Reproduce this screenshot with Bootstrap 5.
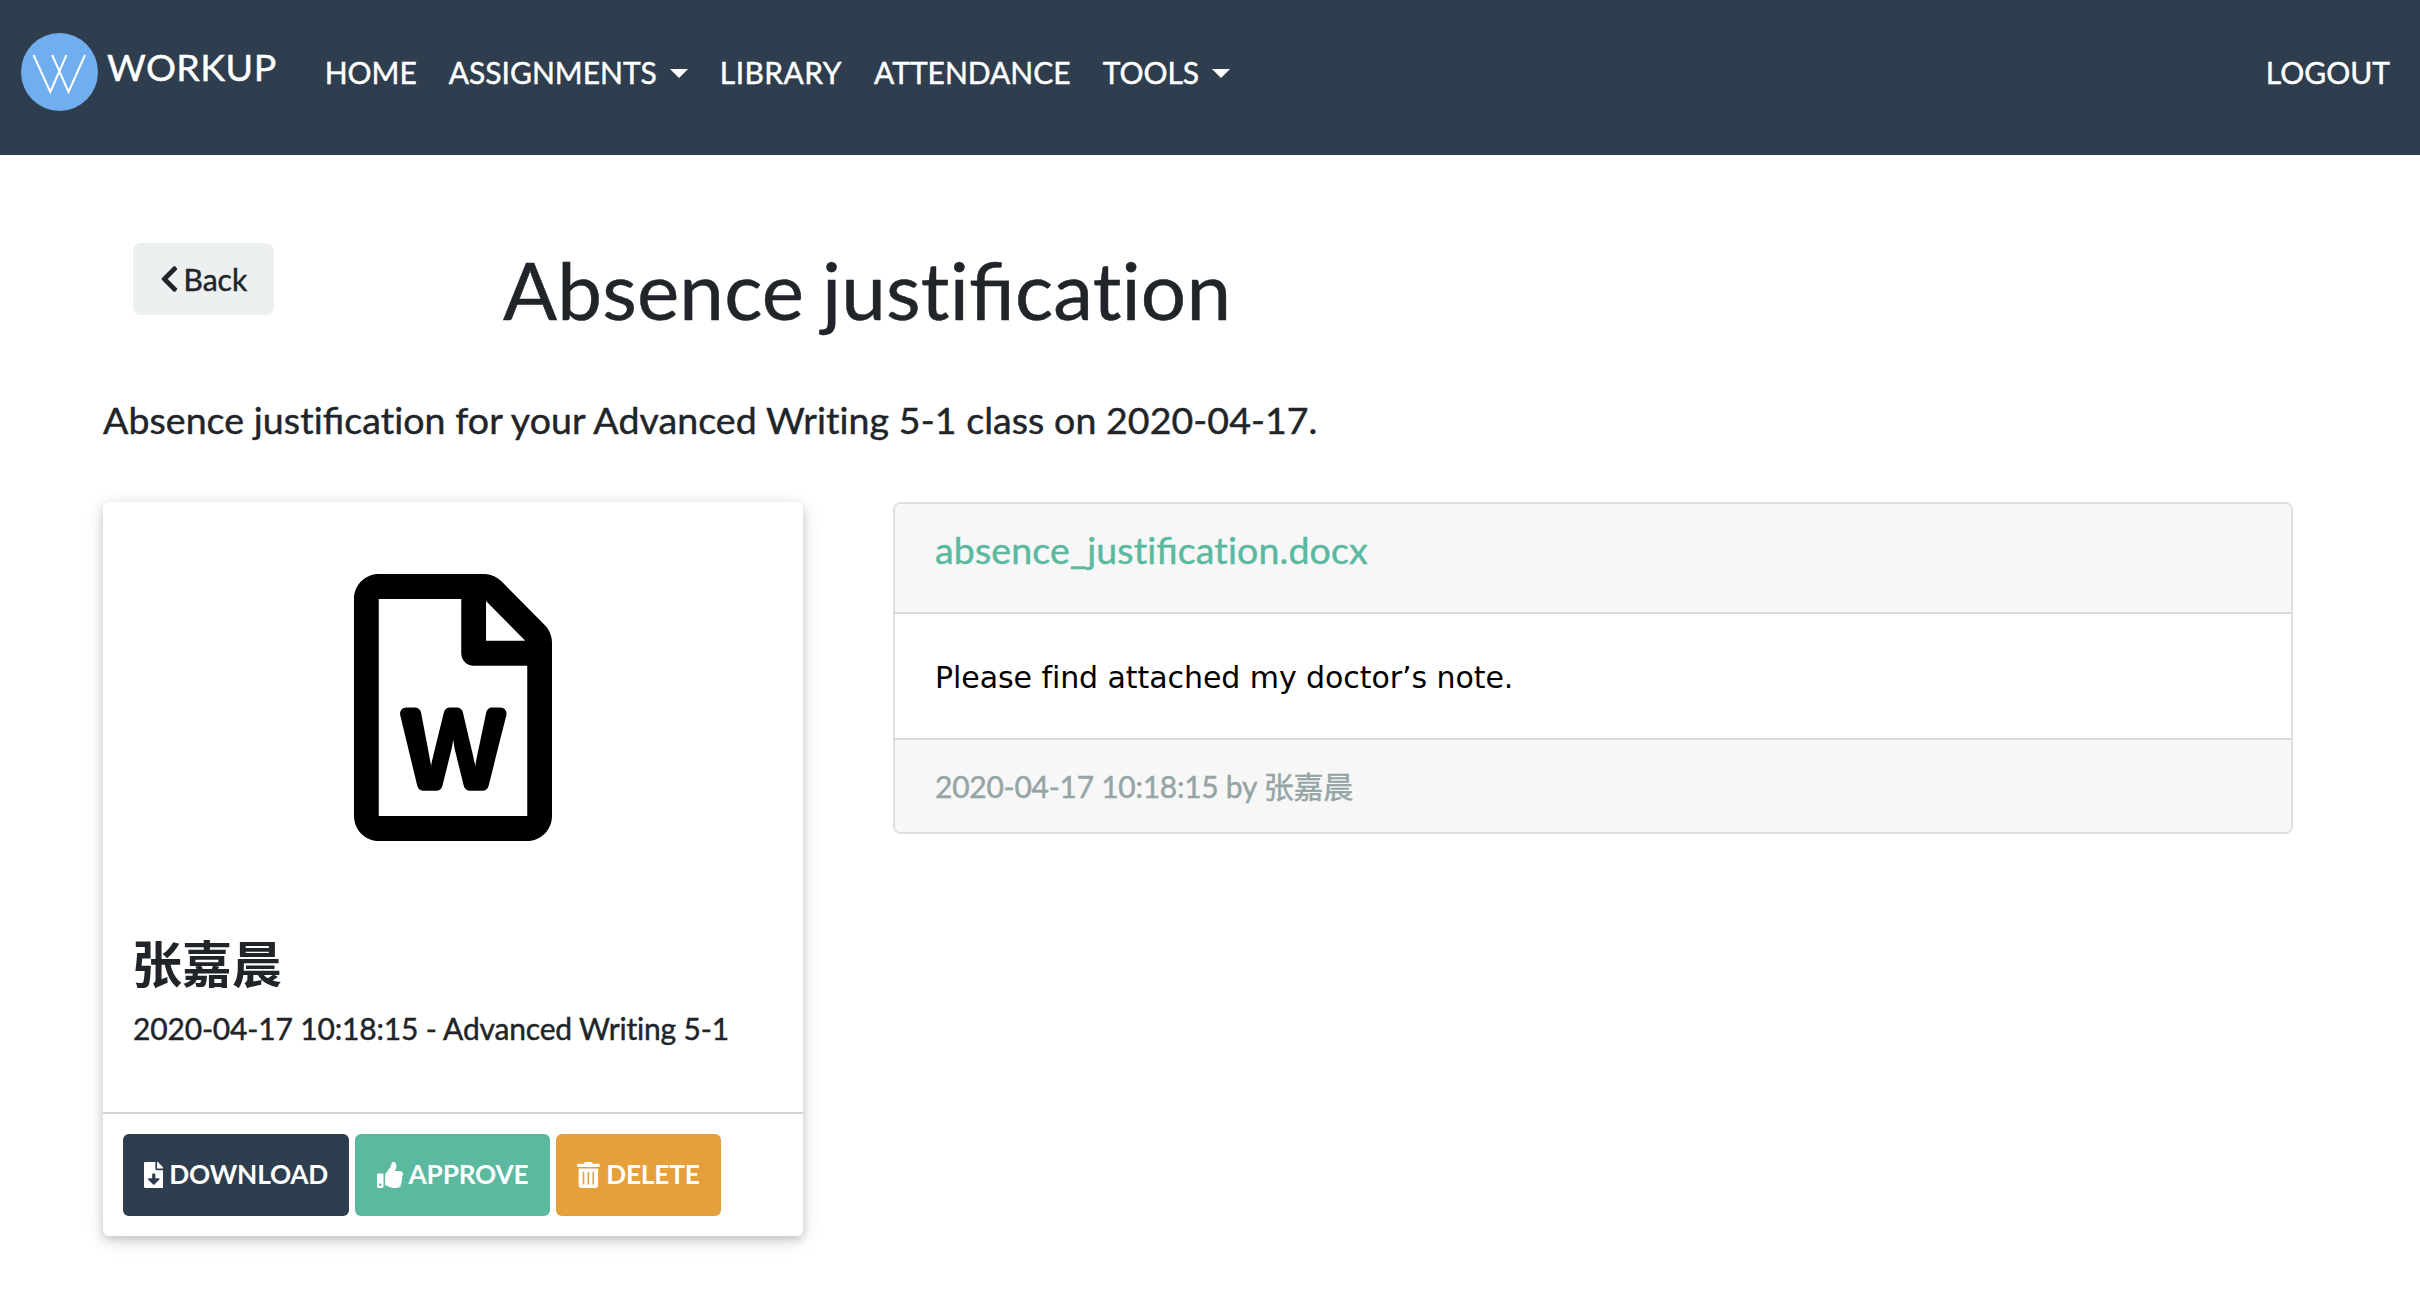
<!DOCTYPE html>
<html lang="en">
<head>
<meta charset="utf-8">
<title>WorkUp - Absence justification</title>
<link href="https://cdn.jsdelivr.net/npm/bootstrap@5.3.0/dist/css/bootstrap.min.css" rel="stylesheet">
<style>
body{font-family:Lato,"Noto Sans CJK SC",sans-serif;font-size:30px;line-height:45px;color:#212529;background:#fff;font-variant-ligatures:none;-webkit-text-stroke:.45px currentColor}
.lig{font-variant-ligatures:common-ligatures;letter-spacing:0}
.topbar{background:#2f3e4e;height:155px;padding:16px 0 0 21px;align-items:flex-start}
.brandlink{color:#fff;font-size:37.5px;line-height:56px;padding:0;margin:17px 32px 0 0;display:flex;align-items:flex-start;gap:9px}
.brandlink:hover{color:#fff}
.brandlink span{margin-top:6px;letter-spacing:.45px}
.brandlink svg{width:77px;height:78px;display:block}
.topbar .navbar-nav .nav-link{color:#fff;padding:34px 16px 0;line-height:45px;white-space:nowrap}
.topbar .navbar-nav .nav-library{letter-spacing:.45px}
.topbar .dropdown-toggle::after{border-width:9px 9px 0;border-top-style:solid;margin-left:13px;vertical-align:6px}
.logout{margin-right:14px}
.main-area{min-height:1145px;padding:86px 127px 0 103px}
.back-btn{background:#ecf0f1;border:0;border-radius:8px;font-size:30px;line-height:45px;height:72px;width:141px;margin:2px 0 0 30px;color:#212529;padding:0;display:flex;align-items:center;justify-content:center;gap:5px}
.back-btn svg{width:18.75px;height:30px}
.page-title{font-size:80px;line-height:96px;font-weight:400;margin:0 0 0 229px;word-spacing:-3px;letter-spacing:.17px}
.intro{font-size:37.5px;line-height:56px;margin:55px 0 54px;letter-spacing:.07px}
.filecard{width:700px;height:734px;border-radius:6px;background:#fff;box-shadow:0 4px 10px rgba(0,0,0,.16),0 4px 20px rgba(0,0,0,.12)}
.docicon{width:198px;height:267px;display:block;margin:72px auto 0}
.person{padding:93px 30px 61px}
.student{font-size:50px;line-height:60px;font-weight:700;margin:0 0 12px -1px;-webkit-text-stroke:0}
.when{letter-spacing:-.18px}
.acts{border-top:2px solid #d2d2d2;padding:20px;gap:6px}
.btn-act{border:0;border-radius:6px;color:#fff!important;font-size:26.25px;line-height:40px;letter-spacing:-.2px;font-weight:700;height:82px;padding:0 0 2px;display:flex;align-items:center;justify-content:center;gap:6px;-webkit-text-stroke:0}
.btn-act svg{height:26px;fill:#fff;position:relative;top:1px}
.act-download{width:226px;background:#2f3e4e!important}
.act-approve{width:195px;background:#5ab99f!important}
.act-delete{width:165px;background:#e59f3b!important}
.notecard{width:1400px;height:332px;border:2px solid #dfdfdf;border-radius:8px}
.notecard .card-header{background:#f7f7f7;border-bottom:2px solid #dadada;height:110px;padding:18px 40px;font-size:37.5px;line-height:56px;letter-spacing:.12px}
.notecard .card-header a{color:#5ab99f;text-decoration:none}
.notecard .card-body{padding:41px 40px 0;font-family:"DejaVu Sans",Verdana,sans-serif;color:#000;line-height:45px;letter-spacing:-.07px;-webkit-text-stroke:0}
.notecard .card-footer{background:#f7f7f7;border-top:2px solid #dadada;height:94px;padding:24px 40px;color:#95a5a6;letter-spacing:-.27px}
</style>
</head>
<body>
<nav class="topbar navbar navbar-expand">
  <a class="brandlink navbar-brand" href="#">
    <svg viewBox="0 0 77 78" fill="none"><ellipse cx="38.5" cy="39" rx="38.5" ry="39" fill="#70aeef"/><path d="M12.5 22l16.8 37 16.2-37M31.2 22l16.3 37 16.5-37" stroke="#fff" stroke-width="2"/></svg>
    <span>WORKUP</span>
  </a>
  <ul class="navbar-nav flex-grow-1">
    <li class="nav-item"><a class="nav-link" href="#">HOME</a></li>
    <li class="nav-item"><a class="nav-link dropdown-toggle" href="#">ASSIGNMENTS</a></li>
    <li class="nav-item"><a class="nav-link nav-library" href="#">LIBRARY</a></li>
    <li class="nav-item"><a class="nav-link" href="#">ATTENDANCE</a></li>
    <li class="nav-item"><a class="nav-link dropdown-toggle" href="#">TOOLS</a></li>
    <li class="nav-item ms-auto logout"><a class="nav-link" href="#">LOGOUT</a></li>
  </ul>
</nav>
<main class="main-area">
  <div class="d-flex align-items-start">
    <a class="btn back-btn" href="#"><svg viewBox="0 0 320 512" fill="#212529"><path d="M34.52 239.03L228.87 44.69c9.37-9.37 24.57-9.37 33.94 0l22.67 22.67c9.36 9.36 9.37 24.52.04 33.9L131.49 256l154.02 154.75c9.34 9.38 9.32 24.54-.04 33.9l-22.67 22.67c-9.37 9.37-24.57 9.37-33.94 0L34.52 272.97c-9.37-9.37-9.37-24.57 0-33.94z"/></svg>Back</a>
    <h1 class="page-title">Absence justi<span class="lig">fi</span>cation</h1>
  </div>
  <p class="intro">Absence justi<span class="lig">fi</span>cation for your Advanced Writing 5-1 class on 2020-04-17.</p>
  <div class="d-flex align-items-start justify-content-between">
    <section class="filecard d-flex flex-column">
      <svg class="docicon" viewBox="0 0 384 512" preserveAspectRatio="none"><path d="M369.9 97.9L286 14C277 5 264.8-.1 252.1-.1H48C21.5 0 0 21.5 0 48v416c0 26.5 21.5 48 48 48h288c26.5 0 48-21.5 48-48V131.9c0-12.7-5.1-25-14.1-34zM332.1 128H256V51.9l76.1 76.1zM48 464V48h160v104c0 13.3 10.7 24 24 24h104v288H48zm220.1-208c-5.7 0-10.6 4-11.7 9.5-20.6 97.7-20.4 95.4-21 103.5-.2-1.2-.4-2.6-.7-4.3-.8-5.1.3.2-23.6-99.5-1.3-5.4-6.1-9.2-11.7-9.2h-13.3c-5.5 0-10.3 3.8-11.7 9.1-24.4 99-24 96.2-24.8 103.7-.1-1.1-.2-2.5-.5-4.2-.7-5.2-14.1-73.3-19.1-99-1.1-5.6-6-9.7-11.8-9.7h-16.8c-7.8 0-13.5 7.3-11.7 14.8 8 32.6 26.7 109.5 33.2 136 1.3 5.4 6.1 9.1 11.7 9.1h25.2c5.5 0 10.3-3.7 11.6-9.1l17.9-71.4c1.5-6.2 2.5-12 3-17.3l2.9 17.3c.1.4 12.6 50.5 17.9 71.4 1.3 5.3 6.1 9.1 11.6 9.1h24.7c5.5 0 10.3-3.7 11.6-9.1 20.8-81.9 30.2-119 34.5-136 1.9-7.6-3.8-14.9-11.6-14.9h-15.8z"/></svg>
      <div class="person">
        <h4 class="student">张嘉晨</h4>
        <p class="when m-0">2020-04-17 10:18:15 - Advanced Writing 5-1</p>
      </div>
      <div class="acts d-flex">
        <a class="btn btn-act act-download" href="#"><svg viewBox="0 0 384 512"><path d="M224 136V0H24C10.7 0 0 10.7 0 24v464c0 13.3 10.7 24 24 24h336c13.3 0 24-10.7 24-24V160H248c-13.2 0-24-10.8-24-24zm76.45 211.36l-96.42 95.7c-6.65 6.61-17.39 6.61-24.04 0l-96.42-95.7C73.42 337.29 80.54 320 94.82 320H160v-80c0-8.84 7.16-16 16-16h32c8.84 0 16 7.16 16 16v80h65.18c14.28 0 21.4 17.29 11.27 27.36zM377 105L279.1 7c-4.5-4.5-10.6-7-17-7H256v128h128v-6.1c0-6.3-2.5-12.4-7-16.9z"/></svg>DOWNLOAD</a>
        <a class="btn btn-act act-approve" href="#"><svg viewBox="0 0 512 512"><path d="M104 224H24c-13.255 0-24 10.745-24 24v240c0 13.255 10.745 24 24 24h80c13.255 0 24-10.745 24-24V248c0-13.255-10.745-24-24-24zM64 472c-13.255 0-24-10.745-24-24s10.745-24 24-24 24 10.745 24 24-10.745 24-24 24zM384 81.452c0 42.416-25.97 66.208-33.277 94.548h101.723c33.397 0 59.397 27.746 59.553 58.098.084 17.938-7.546 37.249-19.439 49.197l-.11.11c9.836 23.337 8.237 56.037-9.308 79.469 8.681 25.895-.069 57.704-16.382 74.757 4.298 17.598 2.244 32.575-6.148 44.632C440.202 511.587 389.616 512 346.839 512l-2.845-.001c-48.287-.017-87.806-17.598-119.56-31.725-15.957-7.099-36.821-15.887-52.651-16.178-6.54-.12-11.783-5.457-11.783-11.998v-213.77c0-3.2 1.282-6.271 3.558-8.521 39.614-39.144 56.648-80.587 89.117-113.111 14.804-14.832 20.188-37.236 25.393-58.902C282.515 39.293 291.817 0 312 0c24 0 72 8 72 81.452z"/></svg>APPROVE</a>
        <a class="btn btn-act act-delete" href="#"><svg viewBox="0 0 448 512"><path d="M32 464a48 48 0 0 0 48 48h288a48 48 0 0 0 48-48V128H32zm272-256a16 16 0 0 1 32 0v224a16 16 0 0 1-32 0zm-96 0a16 16 0 0 1 32 0v224a16 16 0 0 1-32 0zm-96 0a16 16 0 0 1 32 0v224a16 16 0 0 1-32 0zM432 32H312l-9.4-18.7A24 24 0 0 0 281.1 0H166.8a23.72 23.72 0 0 0-21.4 13.3L136 32H16A16 16 0 0 0 0 48v32a16 16 0 0 0 16 16h416a16 16 0 0 0 16-16V48a16 16 0 0 0-16-16z"/></svg>DELETE</a>
      </div>
    </section>
    <section class="card notecard">
      <div class="card-header"><a href="#">absence_justi<span class="lig">fi</span>cation.docx</a></div>
      <div class="card-body">Please find attached my doctor’s note.</div>
      <div class="card-footer">2020-04-17 10:18:15 by 张嘉晨</div>
    </section>
  </div>
</main>
<script src="https://cdn.jsdelivr.net/npm/bootstrap@5.3.0/dist/js/bootstrap.bundle.min.js"></script>
</body>
</html>
